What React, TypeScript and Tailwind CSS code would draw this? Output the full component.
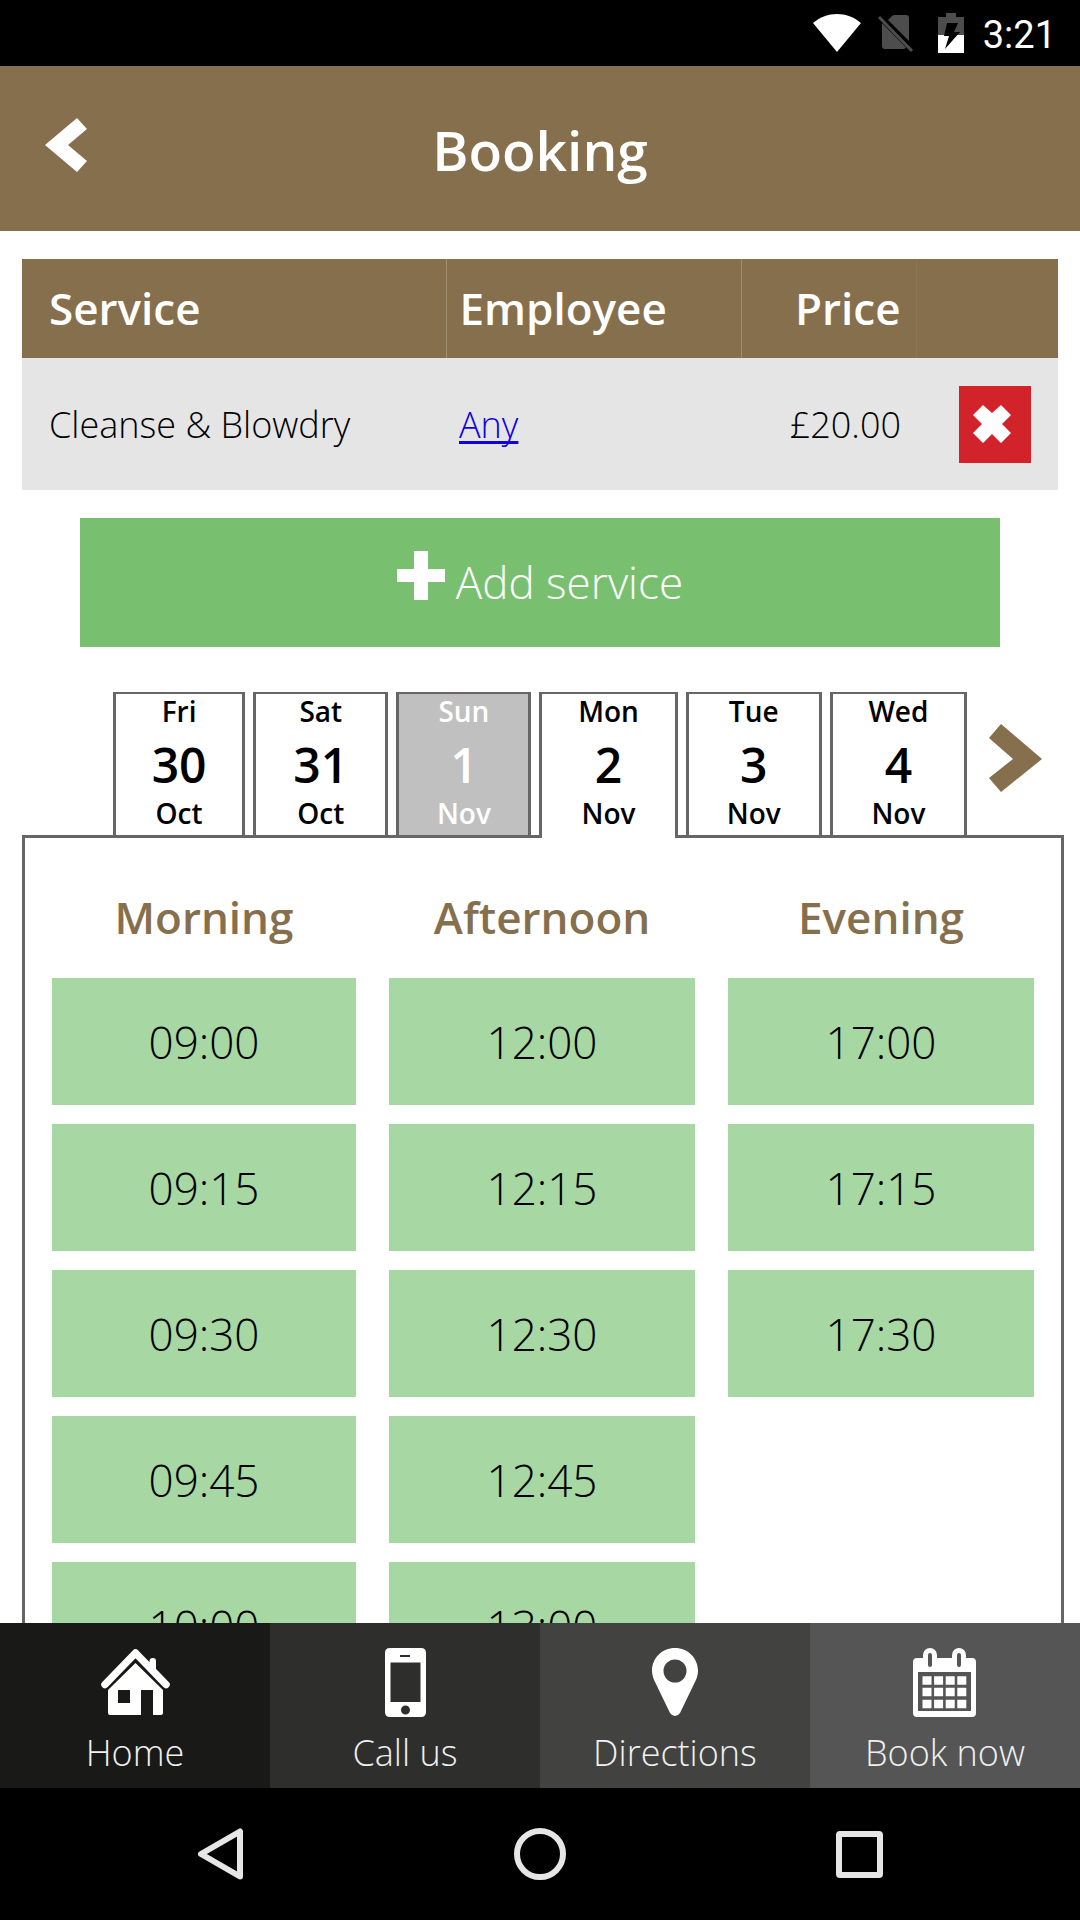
import { useState } from "react";
import clsx from "clsx";

type Day = {
  weekday: string;
  date: number;
  month: string;
  closed?: boolean;
};

const days: Day[] = [
  { weekday: "Fri", date: 30, month: "Oct" },
  { weekday: "Sat", date: 31, month: "Oct" },
  { weekday: "Sun", date: 1, month: "Nov", closed: true },
  { weekday: "Mon", date: 2, month: "Nov" },
  { weekday: "Tue", date: 3, month: "Nov" },
  { weekday: "Wed", date: 4, month: "Nov" },
];

const periods = [
  { name: "Morning", slots: ["09:00", "09:15", "09:30", "09:45", "10:00"] },
  { name: "Afternoon", slots: ["12:00", "12:15", "12:30", "12:45", "13:00"] },
  { name: "Evening", slots: ["17:00", "17:15", "17:30"] },
];

function StatusBar() {
  return (
    <div className="flex h-[66px] shrink-0 items-center justify-end bg-black pr-6 text-white">
      <svg width="48" height="38" viewBox="0 0 48 38" className="mr-[17px]">
        <path d="M0 9C14 -3 34 -3 48 9L24 38Z" fill="#fff" />
      </svg>
      <svg width="36" height="38" viewBox="0 0 36 38" className="mr-6">
        <path
          d="M10 6L14 2Q15 1 17 1H28Q31 1 31 4V27Z M4 9L28 33.500Q27 35 25 35H7Q4 35 4 32Z"
          fill="#4d4d4d"
        />
        <path d="M1 3L34 37" stroke="#4d4d4d" strokeWidth="3" />
      </svg>
      <svg width="26" height="40" viewBox="0 0 26 40" className="mr-[19px]">
        <path d="M0 4H8V0H18V4H26V22H0Z" fill="#4d4d4d" />
        <path d="M0 22H26V40H0Z" fill="#fff" />
        <path d="M9 10H20L16 19H22L7 36L11 23H6Z" fill="#000" />
      </svg>
      <span className="pt-1 font-['Roboto',sans-serif] text-[38px] leading-[48px]">
        3:21
      </span>
    </div>
  );
}

function Header() {
  return (
    <header className="grid h-[165px] shrink-0 grid-cols-[132px_1fr_132px] items-center bg-[#856f4d]">
      <button
        type="button"
        aria-label="Back"
        className="flex h-full items-center pb-2 pl-[45px]"
      >
        <svg width="42" height="54" viewBox="0 0 42 54">
          <path d="M32 0L42 11L23 27L42 43L32 54L0 27Z" fill="#fff" />
        </svg>
      </button>
      <h1 className="pt-[3px] text-center text-[55px] leading-[72px] font-semibold text-white">
        Booking
      </h1>
    </header>
  );
}

function ServiceTable() {
  return (
    <table className="w-full table-fixed border-collapse bg-[#e5e5e5]">
      <thead className="bg-[#856f4d] text-[44px] leading-[58px] font-semibold text-white">
        <tr className="h-[99px]">
          <th className="border-r border-[#a08e70] pb-[2px] pl-[27px] text-left font-semibold">
            Service
          </th>
          <th className="w-[295px] border-r border-[#a08e70] pb-[2px] pl-[13px] text-left font-semibold">
            Employee
          </th>
          <th className="w-[175px] border-r border-[#8b7656] pr-[15px] pb-[2px] text-right font-semibold">
            Price
          </th>
          <th className="w-[142px]" />
        </tr>
      </thead>
      <tbody className="text-[36px] leading-[48px] font-light text-black">
        <tr className="h-[132px]">
          <td className="pt-[2px] pl-[27px]">Cleanse &amp; Blowdry</td>
          <td className="pt-[2px] pl-[13px]">
            <a
              href="#employee"
              className="text-[#1000e0] underline decoration-[3px] underline-offset-[3px] [text-decoration-skip-ink:none]"
            >
              Any
            </a>
          </td>
          <td className="pt-[2px] pr-[15px] text-right">£20.00</td>
          <td className="pr-[27px]">
            <button
              type="button"
              aria-label="Remove service"
              className="ml-auto flex h-[77px] w-[72px] items-center bg-[#d2232a] pl-[14px]"
            >
              <svg width="38" height="38" viewBox="0 0 38 38">
                <path
                  d="M10 0L19 8L28 0L38 10L29 19L38 28L28 38L19 29L10 38L0 28L9 19L0 10Z"
                  fill="#fff"
                />
              </svg>
            </button>
          </td>
        </tr>
      </tbody>
    </table>
  );
}

function BottomNav() {
  const item =
    "flex flex-1 flex-col items-center gap-3 pt-[25px] text-[36px] leading-[48px] font-light text-[#f0f0f0]";

  return (
    <nav className="flex h-[165px] shrink-0">
      <a href="#home" className={clsx(item, "bg-[#191917]")}>
        <svg width="69" height="69" viewBox="0 0 69 69">
          <path
            d="M4 36.500L34.500 5L65 36.500"
            fill="none"
            stroke="#fff"
            strokeWidth="7.500"
            strokeLinecap="round"
            strokeLinejoin="round"
          />
          <path d="M48.500 20V13Q48.500 10 52 10Q55 10 55 13V27Z" fill="#fff" />
          <path
            d="M34.500 15L62 42V65Q62 67 60 67H52V42H40V67H9Q7 67 7 65V42ZM17 42V55H29V42Z"
            fill="#fff"
            fillRule="evenodd"
          />
        </svg>
        Home
      </a>
      <a href="#call" className={clsx(item, "bg-[#2e2e2d]")}>
        <svg width="41" height="69" viewBox="0 0 41 69">
          <path
            d="M5 0H36Q41 0 41 5V64Q41 69 36 69H5Q0 69 0 64V5Q0 0 5 0ZM15 7V9H25V7ZM5.500 14.500V54H35.500V14.500ZM20.500 57.500A4.500 4.500 0 1 0 20.500 66.500A4.500 4.500 0 1 0 20.500 57.500Z"
            fill="#fff"
            fillRule="evenodd"
          />
        </svg>
        Call us
      </a>
      <a href="#directions" className={clsx(item, "bg-[#424240]")}>
        <svg width="46" height="69" viewBox="0 0 46 69">
          <path
            d="M23 0C36 0 46 10 46 23C46 28 44 32 42 36L28 65Q26 68 23 68Q20 68 18 65L4 36C2 32 0 28 0 23C0 10 10 0 23 0ZM23 11.500A11.500 11.500 0 1 0 23 34.500A11.500 11.500 0 1 0 23 11.500Z"
            fill="#fff"
            fillRule="evenodd"
          />
        </svg>
        Directions
      </a>
      <a href="#book" className={clsx(item, "bg-[#555555]")}>
        <svg width="64" height="69" viewBox="0 0 64 69">
          <path
            d="M10 10V7A7 7 0 0 1 24 7V10H39V7A7 7 0 0 1 53 7V10H59Q63 10 63 14V65Q63 69 59 69H4Q0 69 0 65V14Q0 10 4 10ZM5 24V63H58V24Z"
            fill="#fff"
            fillRule="evenodd"
          />
          <path
            d="M17 7V17M46 7V17"
            stroke="#555"
            strokeWidth="4"
            strokeLinecap="round"
          />
          <path
            d="M9.500 32.500H54M9.500 44H54M9.500 56H54"
            stroke="#fff"
            strokeWidth="8.500"
            strokeDasharray="9 2.600"
          />
        </svg>
        Book now
      </a>
    </nav>
  );
}

function SystemNav() {
  return (
    <div className="flex h-[132px] shrink-0 items-center justify-center gap-[269px] bg-black">
      <button type="button" aria-label="System back">
        <svg width="48" height="52" viewBox="0 0 48 52">
          <path
            d="M43 3.500V48.500L4 26Z"
            fill="none"
            stroke="#e6e6e6"
            strokeWidth="6"
            strokeLinejoin="round"
          />
        </svg>
      </button>
      <button type="button" aria-label="System home">
        <svg width="52" height="52" viewBox="0 0 52 52">
          <circle
            cx="26"
            cy="26"
            r="23"
            fill="none"
            stroke="#e6e6e6"
            strokeWidth="6"
          />
        </svg>
      </button>
      <button type="button" aria-label="Recent apps">
        <svg width="48" height="52" viewBox="0 0 48 52">
          <rect
            x="4"
            y="6"
            width="41"
            height="41"
            rx="1"
            fill="none"
            stroke="#e6e6e6"
            strokeWidth="6"
            strokeLinejoin="round"
          />
        </svg>
      </button>
    </div>
  );
}

export default function App() {
  const [selected, setSelected] = useState(3);

  return (
    <div className="flex h-screen flex-col bg-white font-['Open_Sans',sans-serif] text-black">
      <StatusBar />
      <Header />

      <main className="min-h-0 flex-1 overflow-y-auto pt-7 [scrollbar-width:none]">
        <div className="px-[22px]">
          <ServiceTable />
        </div>

        {/* Add service */}
        <div className="mt-7 px-20">
          <button
            type="button"
            className="flex h-[129px] w-full items-center justify-center gap-[11px] bg-[#78c070] text-[44px] leading-[58px] font-light text-white"
          >
            <svg width="48" height="64" viewBox="0 0 48 64">
              <path
                d="M17 0H31V18H48V31H31V49H17V31H0V18H17Z"
                fill="#fff"
              />
            </svg>
            <span className="pb-[2px]">Add service</span>
          </button>
        </div>

        <section className="mt-[45px] mr-4 ml-[22px]">
          {/* Days */}
          <div className="flex h-[143px] pl-[91px]">
            <div
              role="tablist"
              className="grid flex-1 grid-cols-[132fr_135fr_135fr_138fr_136fr_137fr] gap-2"
            >
              {days.map((day, index) => (
                <button
                  key={day.date}
                  type="button"
                  role="tab"
                  aria-selected={index === selected}
                  disabled={day.closed}
                  onClick={() => setSelected(index)}
                  className={clsx(
                    "flex flex-col items-center border-x-[3px] border-t-2 border-[#666666] font-semibold",
                    index === selected && "relative z-10 -mb-[3px]",
                    day.closed ? "bg-[#c0c0c0] text-white" : "bg-white"
                  )}
                >
                  <span className="text-[28px] leading-[34px]">
                    {day.weekday}
                  </span>
                  <span className="text-[48px] leading-[74px]">{day.date}</span>
                  <span className="text-[28px] leading-[22px]">
                    {day.month}
                  </span>
                </button>
              ))}
            </div>
            <button
              type="button"
              aria-label="Next days"
              className="flex w-[97px] items-center pb-3 pl-[22px]"
            >
              <svg width="53" height="68" viewBox="0 0 53 68">
                <path
                  d="M12 0L53 35L12 68L0 54L24 35L0 14Z"
                  fill="#856f4d"
                />
              </svg>
            </button>
          </div>

          {/* Time slots */}
          <div className="grid grid-cols-[304fr_306fr_306fr] gap-x-[33px] border-[3px] border-[#666666] px-[27px] pt-[50px] pb-7">
            {periods.map((period) => (
              <div key={period.name} className="flex flex-col gap-[19px]">
                <h2 className="mb-[13px] text-center text-[44px] leading-[58px] font-semibold text-[#856f4d]">
                  {period.name}
                </h2>
                {period.slots.map((slot) => (
                  <button
                    key={slot}
                    type="button"
                    className="h-[127px] bg-[#a7d7a2] text-[44px] leading-[58px] font-light"
                  >
                    {slot}
                  </button>
                ))}
              </div>
            ))}
          </div>
        </section>
      </main>

      <BottomNav />
      <SystemNav />
    </div>
  );
}
